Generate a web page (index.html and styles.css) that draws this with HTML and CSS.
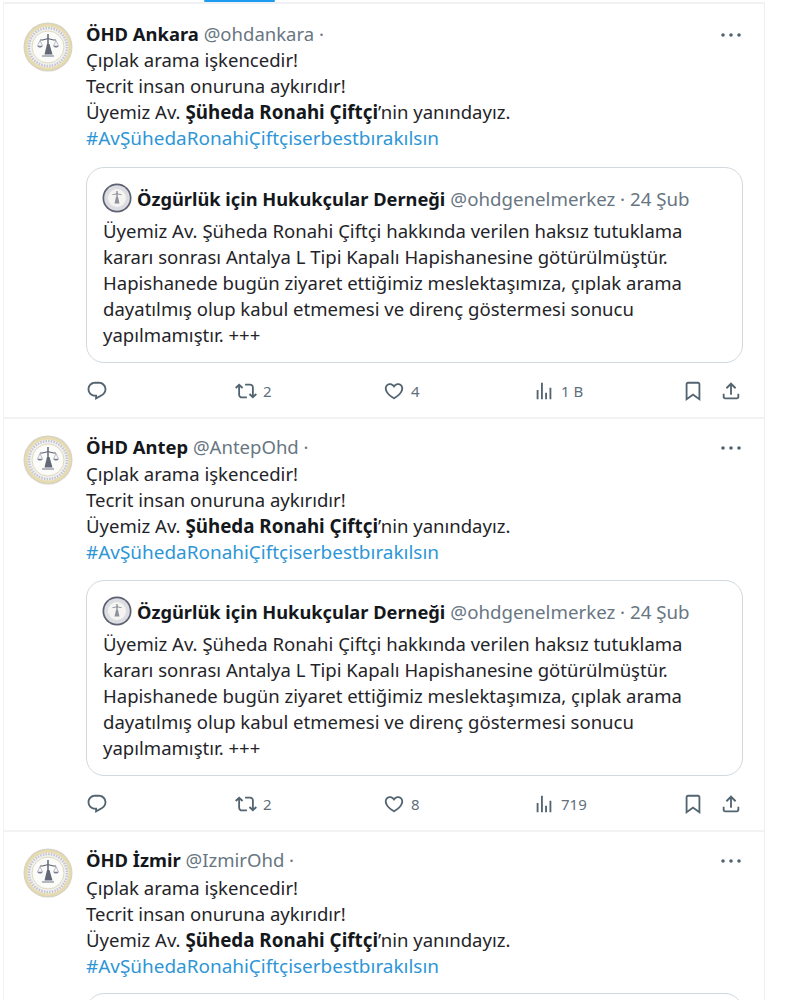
FILE: index.html
```html
<!DOCTYPE html>
<html lang="tr">
<head>
<meta charset="utf-8">
<title>Gönderiler</title>
<link rel="stylesheet" href="styles.css">
</head>
<body>
<svg class="defs" width="0" height="0" aria-hidden="true">
  <symbol id="seal" viewBox="0 0 50 50">
    <circle cx="25" cy="25" r="24.500" fill="#d9d3c2"/>
    <circle cx="25" cy="25" r="23" fill="#e8dcae"/>
    <circle cx="25" cy="25" r="20.500" fill="#f1f1f3"/>
    <circle cx="25" cy="25" r="19" fill="none" stroke="#c3c5cf" stroke-width="2.500" stroke-dasharray="1.500 1.200"/>
    <circle cx="25" cy="25" r="16" fill="#fbfbfa" stroke="#d9d0a8" stroke-width=".8"/>
    <path d="M25 12v20" stroke="#565c6b" stroke-width="1.400"/>
    <path d="M17 18c3 .5 5-1.200 8-1.200s5 1.700 8 1.200" fill="none" stroke="#5b6170" stroke-width="1.100"/>
    <path d="M17 18.500l-2.500 5.500h5zM33 18.500l-2.500 5.500h5z" fill="none" stroke="#9a9eaa" stroke-width=".7"/>
    <path d="M14.500 24c.8 2 4.200 2 5 0zM30.500 24c.8 2 4.200 2 5 0z" fill="#7b8090"/>
    <path d="M24 22l-2.500 10.500h8L26.500 22z" fill="#626876"/>
    <path d="M19 34h12" stroke="#a5a8b3" stroke-width="1.600"/>
  </symbol>
  <symbol id="seal-mini" viewBox="0 0 30 30">
    <circle cx="15" cy="15" r="14.500" fill="#5d6070"/>
    <circle cx="15" cy="15" r="12.800" fill="#dcdde3"/>
    <circle cx="15" cy="15" r="9" fill="#f5f4f1"/>
    <path d="M15 8v12" stroke="#6a6f7d" stroke-width="1"/>
    <path d="M10.500 11.500c2 .3 3-.7 4.500-.7s2.500 1 4.500.7" fill="none" stroke="#777c89" stroke-width=".8"/>
    <path d="M14 14l-1.500 6.500h5L16 14z" fill="#8d919d"/>
  </symbol>
  <symbol id="i-more" viewBox="0 0 20 20"><circle cx="2" cy="10" r="1.800"/><circle cx="10" cy="10" r="1.800"/><circle cx="18" cy="10" r="1.800"/></symbol>
  <symbol id="i-reply" viewBox="0 0 24 24"><path d="M1.751 10c0-4.420 3.584-8 8.005-8h4.366c4.490 0 8.129 3.640 8.129 8.130 0 2.960-1.607 5.680-4.196 7.110l-8.054 4.460v-3.690h-.067c-4.490.1-8.183-3.510-8.183-8.010zm8.005-6c-3.317 0-6.005 2.690-6.005 6 0 3.370 2.770 6.080 6.138 6.010l.351-.01h1.761v2.300l5.087-2.810c1.951-1.080 3.163-3.130 3.163-5.360 0-3.390-2.744-6.130-6.129-6.130H9.756z"/></symbol>
  <symbol id="i-rt" viewBox="0 0 24 24"><path d="M4.500 3.880l4.432 4.140-1.364 1.460L5.500 7.550V16c0 1.100.896 2 2 2H13v2H7.500c-2.209 0-4-1.790-4-4V7.550L1.432 9.480.068 8.020 4.500 3.880zM16.500 6H11V4h5.500c2.209 0 4 1.790 4 4v8.450l2.068-1.930 1.364 1.460-4.432 4.140-4.432-4.140 1.364-1.460 2.068 1.930V8c0-1.100-.896-2-2-2z"/></symbol>
  <symbol id="i-like" viewBox="0 0 24 24"><path d="M16.697 5.500c-1.222-.06-2.679.51-3.890 2.160l-.805 1.090-.806-1.090C9.984 6.010 8.526 5.440 7.304 5.500c-1.243.07-2.349.78-2.910 1.910-.552 1.120-.633 2.780.479 4.820 1.074 1.970 3.257 4.270 7.129 6.610 3.870-2.340 6.052-4.640 7.126-6.610 1.111-2.040 1.030-3.700.477-4.820-.561-1.130-1.666-1.840-2.908-1.910zm4.187 7.690c-1.351 2.480-4.001 5.120-8.379 7.670l-.503.3-.504-.3c-4.379-2.550-7.029-5.190-8.382-7.670-1.360-2.500-1.410-4.860-.514-6.670.887-1.790 2.647-2.910 4.601-3.010 1.651-.09 3.368.56 4.798 2.010 1.429-1.450 3.146-2.100 4.796-2.010 1.954.1 3.714 1.220 4.601 3.010.896 1.810.846 4.170-.514 6.670z"/></symbol>
  <symbol id="i-views" viewBox="0 0 24 24"><path d="M8.750 21V3h2v18h-2zM18 21V8.500h2V21h-2zM4 21l.004-10h2L6 21H4zm9.248 0v-7h2v7h-2z"/></symbol>
  <symbol id="i-save" viewBox="0 0 24 24"><path d="M4 4.500C4 3.120 5.119 2 6.500 2h11C18.881 2 20 3.120 20 4.500v18.440l-8-5.710-8 5.710V4.500zM6.500 4c-.276 0-.5.220-.5.500v14.560l6-4.290 6 4.290V4.500c0-.28-.224-.5-.5-.5h-11z"/></symbol>
  <symbol id="i-share" viewBox="0 0 24 24"><path d="M12 2.590l5.700 5.700-1.410 1.420L13 6.410V16h-2V6.410l-3.300 3.300-1.410-1.420L12 2.590zM21 15l-.02 3.510c0 1.380-1.120 2.490-2.500 2.490H5.500C4.110 21 3 19.880 3 18.500V15h2v3.500c0 .28.220.5.500.5h12.980c.28 0 .5-.22.5-.5L19 15h2z"/></symbol>
</svg>

<div class="tabbar"><span class="tab-mark"></span></div>
<main class="timeline">

  <article class="post">
    <svg class="avatar"><use href="#seal"/></svg>
    <div class="post-main">
      <header class="post-head">
        <div class="names"><strong class="name">ÖHD Ankara</strong> <span class="muted">@ohdankara ·</span></div>
        <svg class="more"><use href="#i-more"/></svg>
      </header>
      <p class="line">Çıplak arama işkencedir!</p>
      <p class="line">Tecrit insan onuruna aykırıdır!</p>
      <p class="line">Üyemiz Av. <b>Şüheda Ronahi Çiftçi</b>’nin yanındayız.</p>
      <p class="line tag">#AvŞühedaRonahiÇiftçiserbestbırakılsın</p>
      <section class="quote">
        <div class="quote-head"><svg class="mini"><use href="#seal-mini"/></svg><strong class="qname">Özgürlük için Hukukçular Derneği</strong> <span class="qmuted">@ohdgenelmerkez · 24 Şub</span></div>
        <p class="line">Üyemiz Av. Şüheda Ronahi Çiftçi hakkında verilen haksız tutuklama</p>
        <p class="line">kararı sonrası Antalya L Tipi Kapalı Hapishanesine götürülmüştür.</p>
        <p class="line">Hapishanede bugün ziyaret ettiğimiz meslektaşımıza, çıplak arama</p>
        <p class="line">dayatılmış olup kabul etmemesi ve direnç göstermesi sonucu</p>
        <p class="line">yapılmamıştır. +++</p>
      </section>
      <footer class="actions">
        <span class="act"><svg class="ico"><use href="#i-reply"/></svg></span>
        <span class="act"><svg class="ico"><use href="#i-rt"/></svg>2</span>
        <span class="act"><svg class="ico"><use href="#i-like"/></svg>4</span>
        <span class="act"><svg class="ico"><use href="#i-views"/></svg>1 B</span>
        <span class="act"><svg class="ico"><use href="#i-save"/></svg></span>
        <span class="act"><svg class="ico"><use href="#i-share"/></svg></span>
      </footer>
    </div>
  </article>

  <article class="post">
    <svg class="avatar"><use href="#seal"/></svg>
    <div class="post-main">
      <header class="post-head">
        <div class="names"><strong class="name">ÖHD Antep</strong> <span class="muted">@AntepOhd ·</span></div>
        <svg class="more"><use href="#i-more"/></svg>
      </header>
      <p class="line">Çıplak arama işkencedir!</p>
      <p class="line">Tecrit insan onuruna aykırıdır!</p>
      <p class="line">Üyemiz Av. <b>Şüheda Ronahi Çiftçi</b>’nin yanındayız.</p>
      <p class="line tag">#AvŞühedaRonahiÇiftçiserbestbırakılsın</p>
      <section class="quote">
        <div class="quote-head"><svg class="mini"><use href="#seal-mini"/></svg><strong class="qname">Özgürlük için Hukukçular Derneği</strong> <span class="qmuted">@ohdgenelmerkez · 24 Şub</span></div>
        <p class="line">Üyemiz Av. Şüheda Ronahi Çiftçi hakkında verilen haksız tutuklama</p>
        <p class="line">kararı sonrası Antalya L Tipi Kapalı Hapishanesine götürülmüştür.</p>
        <p class="line">Hapishanede bugün ziyaret ettiğimiz meslektaşımıza, çıplak arama</p>
        <p class="line">dayatılmış olup kabul etmemesi ve direnç göstermesi sonucu</p>
        <p class="line">yapılmamıştır. +++</p>
      </section>
      <footer class="actions">
        <span class="act"><svg class="ico"><use href="#i-reply"/></svg></span>
        <span class="act"><svg class="ico"><use href="#i-rt"/></svg>2</span>
        <span class="act"><svg class="ico"><use href="#i-like"/></svg>8</span>
        <span class="act"><svg class="ico"><use href="#i-views"/></svg>719</span>
        <span class="act"><svg class="ico"><use href="#i-save"/></svg></span>
        <span class="act"><svg class="ico"><use href="#i-share"/></svg></span>
      </footer>
    </div>
  </article>

  <article class="post">
    <svg class="avatar"><use href="#seal"/></svg>
    <div class="post-main">
      <header class="post-head">
        <div class="names"><strong class="name">ÖHD İzmir</strong> <span class="muted">@IzmirOhd ·</span></div>
        <svg class="more"><use href="#i-more"/></svg>
      </header>
      <p class="line">Çıplak arama işkencedir!</p>
      <p class="line">Tecrit insan onuruna aykırıdır!</p>
      <p class="line">Üyemiz Av. <b>Şüheda Ronahi Çiftçi</b>’nin yanındayız.</p>
      <p class="line tag">#AvŞühedaRonahiÇiftçiserbestbırakılsın</p>
      <section class="quote"></section>
    </div>
  </article>

</main>
</body>
</html>
```

FILE: styles.css
```css
* { box-sizing: border-box; }
html, body { margin: 0; height: 100%; overflow: hidden; background: #fff; }
body {
  font-family: "Noto Sans", "Open Sans", "Liberation Sans", sans-serif;
  font-size: 18.55px;
  color: #1f2429;
}
.defs { display: block; height: 0; }
.tabbar { height: 4px; margin: 0 30px 0 3px; border-bottom: 2px solid #eff1f2; }
.tab-mark { display: block; width: 71px; height: 2px; margin-left: 201px; background: #1d9bf0; border-radius: 2px; }
.timeline { width: 762px; height: 996px; margin-left: 3px; padding-top: 2px; overflow: hidden; border-left: 1px solid #eff3f4; border-right: 1px solid #eceff1; }
.post { display: flex; height: 413px; padding: 16px 21px 0 19px; border-bottom: 2px solid #f1f3f4; }
.avatar { flex: none; width: 50px; height: 50px; margin-right: 13px; }
.post-main { flex: 1; min-width: 0; }
.post-head { display: flex; justify-content: space-between; align-items: center; height: 24px; padding-bottom: 2px; margin-bottom: 1px; }
.post:nth-child(2) .post-head { margin-bottom: 2px; }
.post:nth-child(3) .post-head { margin-bottom: 3px; }
.more { width: 20px; height: 20px; margin: 3px 2px 0 0; fill: #536471; }
.name { font-size: 18.4px; font-weight: 700; color: #14181c; }
.qname { font-size: 18.25px; font-weight: 700; color: #14181c; }
.muted { color: #687682; }
.qmuted { color: #687682; font-size: 18.7px; }
.line { margin: 0; height: 26px; line-height: 26px; white-space: nowrap; }
.line b { font-size: 18.8px; font-weight: 700; color: #14181c; }
.tag { color: #2e96d6; font-size: 18.95px; }
.quote { height: 196px; margin-top: 16px; padding: 15px 16px 0; border: 1px solid #cfd9de; border-radius: 18px; }
.post:nth-child(2) .quote { margin-top: 15px; }
.post:nth-child(3) .quote { margin-top: 14px; }
.quote-head { display: flex; align-items: center; gap: 5px; height: 30px; margin-bottom: 5px; white-space: pre; }
.mini { flex: none; width: 30px; height: 30px; margin-left: -1px; }
.actions {
  display: grid;
  grid-template-columns: 149px 148px 150px 149px 38px 1fr;
  align-items: center;
  height: 22px;
  margin-top: 17px;
  font-size: 15px;
  color: #5f6f7b;
}
.act { display: flex; align-items: center; gap: 6px; }
.ico { flex: none; width: 22px; height: 22px; fill: #536471; }
```
